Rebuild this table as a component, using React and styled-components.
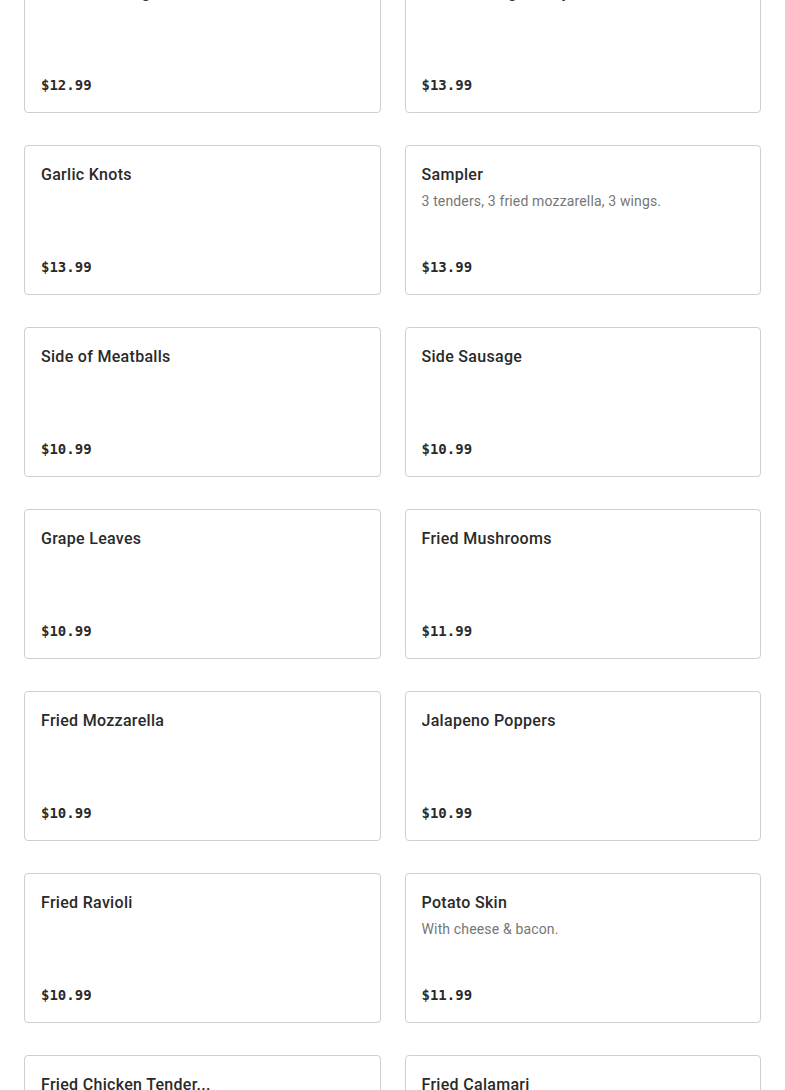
import React from "react";
import styled, { createGlobalStyle } from "styled-components";

const Global = createGlobalStyle`
  html, body { margin: 0; padding: 0; background: #ffffff; }
  body { font-family: Roboto, "Liberation Sans", Arial, sans-serif; color: #2b2b2b; }
`;

const Grid = styled.div`
  display: grid;
  grid-template-columns: 1fr 1fr;
  column-gap: 24px;
  row-gap: 32px;
  padding: 0 24px 40px;
  margin-top: -37px;
`;

const Card = styled.div`
  box-sizing: border-box;
  height: 150px;
  border: 1px solid #cfcfcf;
  border-radius: 4px;
  background: #fff;
  padding: 16px 16px 17px;
  display: flex;
  flex-direction: column;
  min-width: 0;
`;

const Title = styled.div`
  font-size: 16px;
  line-height: 25px;
  font-weight: 500;
  letter-spacing: 0.3px;
  color: #2a2a2a;
  white-space: nowrap;
  overflow: hidden;
`;

const Desc = styled.div`
  margin-top: 4px;
  font-size: 14px;
  line-height: 20px;
  letter-spacing: 0.15px;
  color: #767676;
`;

const Price = styled.div`
  margin-top: auto;
  font-family: "DejaVu Sans Mono", "Liberation Mono", monospace;
  font-weight: 700;
  font-size: 14px;
  line-height: 20px;
  color: #2a2a2a;
`;

const items = [
  { name: "Boneless Wings Platter", price: "$12.99" },
  { name: "Buffalo Wings Party", price: "$13.99" },
  { name: "Garlic Knots", price: "$13.99" },
  { name: "Sampler", desc: "3 tenders, 3 fried mozzarella, 3 wings.", price: "$13.99" },
  { name: "Side of Meatballs", price: "$10.99" },
  { name: "Side Sausage", price: "$10.99" },
  { name: "Grape Leaves", price: "$10.99" },
  { name: "Fried Mushrooms", price: "$11.99" },
  { name: "Fried Mozzarella", price: "$10.99" },
  { name: "Jalapeno Poppers", price: "$10.99" },
  { name: "Fried Ravioli", price: "$10.99" },
  { name: "Potato Skin", desc: "With cheese & bacon.", price: "$11.99" },
  { name: "Fried Chicken Tender...", price: "$12.99" },
  { name: "Fried Calamari", price: "$14.99" },
];

export default function App() {
  return (
    <>
      <Global />
      <Grid>
        {items.map((it, i) => (
          <Card key={i}>
            <Title>{it.name}</Title>
            {it.desc && <Desc>{it.desc}</Desc>}
            <Price>{it.price}</Price>
          </Card>
        ))}
      </Grid>
    </>
  );
}
